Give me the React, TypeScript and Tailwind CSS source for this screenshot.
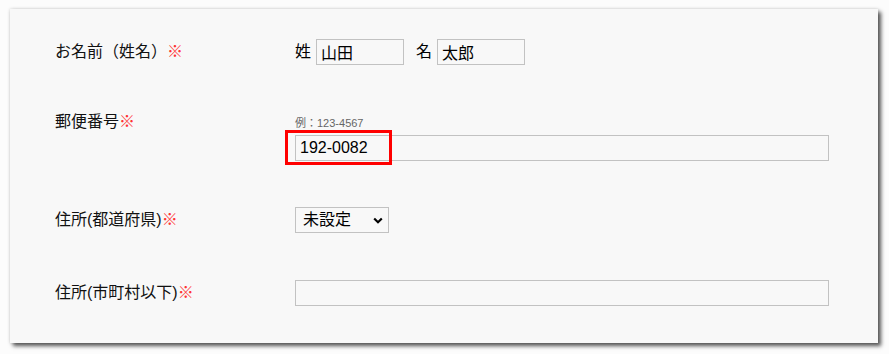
const font = { fontFamily: '"Liberation Sans", "Noto Sans CJK JP", sans-serif' };

function Label({ text }: { text: string }) {
  return (
    <div className="w-[240px] shrink-0 text-[16px] leading-6 text-[#111]">
      {text}
      <span className="text-[#f33]">※</span>
    </div>
  );
}

function TextBox({ value, className }: { value?: string; className: string }) {
  return (
    <input
      readOnly
      value={value ?? ''}
      className={`h-[26px] border border-[#c2c2c2] bg-[#f8f8f8] px-[4px] text-[16px] text-black outline-none ${className}`}
      style={font}
    />
  );
}

export default function App() {
  return (
    <div className="min-h-screen bg-[#fcfcfc] pl-[10px] pt-[9px]" style={font}>
      <div className="h-[334px] w-[868px] bg-[#f8f8f8] pl-[45px] pt-[30px] shadow-[3px_3px_4px_#555,0_0_3px_#d0d0d0]">
        {/* お名前 */}
        <div className="flex items-center">
          <Label text="お名前（姓名）" />
          <div className="flex items-center text-[16px]">
            <span>姓</span>
            <TextBox value="山田" className="ml-[5px] w-[88px]" />
            <span className="ml-[12px]">名</span>
            <TextBox value="太郎" className="ml-[5px] w-[88px]" />
          </div>
        </div>

        {/* 郵便番号 */}
        <div className="mt-[45px] flex items-start">
          <Label text="郵便番号" />
          <div className="pt-[7px]">
            <div className="text-[11px] leading-[13px] text-[#666]">例：123-4567</div>
            <div className="relative mt-[5px]">
              <TextBox value="192-0082" className="w-[534px]" />
              <div className="pointer-events-none absolute left-[-10px] top-[-5px] h-[35px] w-[107px] border-[3px] border-[#f00]" />
            </div>
          </div>
        </div>

        {/* 都道府県 */}
        <div className="mt-[46px] flex items-center">
          <Label text="住所(都道府県)" />
          <div className="relative flex h-[26px] w-[94px] items-center border border-[#c2c2c2] bg-[#f8f8f8] pl-[7px] text-[16px]">
            <span>未設定</span>
            <svg className="absolute right-[5px] top-[9px]" width="10" height="7" viewBox="0 0 10 7">
              <path d="M1.2 1.5 L5 5.2 L8.8 1.5" fill="none" stroke="#000" strokeWidth="2.2" />
            </svg>
          </div>
        </div>

        {/* 市町村以下 */}
        <div className="mt-[47px] flex items-center">
          <Label text="住所(市町村以下)" />
          <TextBox className="w-[534px]" />
        </div>
      </div>
    </div>
  );
}
